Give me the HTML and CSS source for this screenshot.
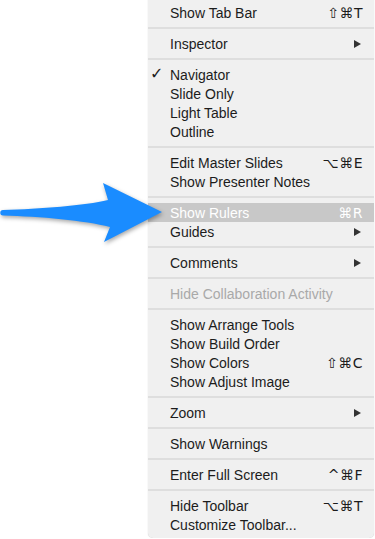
FILE: index.html
```html
<!DOCTYPE html>
<html lang="en">
<head>
  <meta charset="UTF-8">
  <meta name="viewport" content="width=device-width, initial-scale=1.0">
  <title>View menu</title>
  <link rel="stylesheet" href="styles.css">
</head>
<body>
  <div class="menu">
    <ul class="group">
      <li class="item"><span class="label">Show Tab Bar</span><span class="key">⇧⌘T</span></li>
    </ul>
    <div class="sep"></div>
    <ul class="group">
      <li class="item"><span class="label">Inspector</span><span class="sub"></span></li>
    </ul>
    <div class="sep"></div>
    <ul class="group">
      <li class="item checked"><span class="check">✓</span><span class="label">Navigator</span></li>
      <li class="item"><span class="label">Slide Only</span></li>
      <li class="item"><span class="label">Light Table</span></li>
      <li class="item"><span class="label">Outline</span></li>
    </ul>
    <div class="sep"></div>
    <ul class="group">
      <li class="item"><span class="label">Edit Master Slides</span><span class="key">⌥⌘E</span></li>
      <li class="item"><span class="label">Show Presenter Notes</span></li>
    </ul>
    <div class="sep"></div>
    <ul class="group">
      <li class="item active"><span class="label">Show Rulers</span><span class="key">⌘R</span></li>
      <li class="item"><span class="label">Guides</span><span class="sub"></span></li>
    </ul>
    <div class="sep"></div>
    <ul class="group">
      <li class="item"><span class="label">Comments</span><span class="sub"></span></li>
    </ul>
    <div class="sep"></div>
    <ul class="group">
      <li class="item disabled"><span class="label">Hide Collaboration Activity</span></li>
    </ul>
    <div class="sep"></div>
    <ul class="group">
      <li class="item"><span class="label">Show Arrange Tools</span></li>
      <li class="item"><span class="label">Show Build Order</span></li>
      <li class="item"><span class="label">Show Colors</span><span class="key">⇧⌘C</span></li>
      <li class="item"><span class="label">Show Adjust Image</span></li>
    </ul>
    <div class="sep"></div>
    <ul class="group">
      <li class="item"><span class="label">Zoom</span><span class="sub"></span></li>
    </ul>
    <div class="sep"></div>
    <ul class="group">
      <li class="item"><span class="label">Show Warnings</span></li>
    </ul>
    <div class="sep"></div>
    <ul class="group">
      <li class="item"><span class="label">Enter Full Screen</span><span class="key">^⌘F</span></li>
    </ul>
    <div class="sep"></div>
    <ul class="group">
      <li class="item"><span class="label">Hide Toolbar</span><span class="key">⌥⌘T</span></li>
      <li class="item"><span class="label">Customize Toolbar...</span></li>
    </ul>
  </div>

  <svg class="pointer" width="170" height="80" viewBox="0 0 170 80">
    <path d="M 3 40 C 40 39, 85 35.5, 108 30 L 103 13 L 162 42 L 104 72 L 110 57 C 85 50.5, 40 46.5, 3 45.5 A 2.75 2.75 0 0 1 3 40 Z" fill="#1a8cff"/>
  </svg>
</body>
</html>
```

FILE: styles.css
```css
body {
  margin: 0;
  padding: 0;
  background: #fff;
  font-family: "Liberation Sans", Arial, sans-serif;
  font-size: 14px;
  color: #1c1c1c;
}
.menu {
  margin-left: 148px;
  width: 226px;
  padding: 3px 0 4px;
  background: #f0f0f0;
  border-radius: 0 0 5px 5px;
  box-shadow: 0 0 1px rgba(0, 0, 0, 0.25);
}
.group {
  list-style: none;
  margin: 0;
  padding: 0;
}
.item {
  position: relative;
  display: flex;
  align-items: center;
  justify-content: space-between;
  height: 19px;
  padding: 0 11px 0 22px;
}
.label {
  white-space: nowrap;
}
.key {
  font-family: "DejaVu Sans", "Liberation Sans", sans-serif;
  font-size: 14px;
  letter-spacing: 0.5px;
}
.sub {
  width: 0;
  height: 0;
  margin-right: 2px;
  border-left: 7px solid #333;
  border-top: 4.5px solid transparent;
  border-bottom: 4.5px solid transparent;
}
.check {
  position: absolute;
  left: 2px;
  top: -1px;
  font-family: "DejaVu Sans", sans-serif;
  font-size: 16px;
}
.active {
  background: #c8c8c8;
  color: #fff;
}
.disabled {
  color: #a9a9a9;
}
.sep {
  margin: 5px 0;
  height: 2px;
  background: #dedede;
}
.pointer {
  position: absolute;
  left: 0;
  top: 170px;
  filter: drop-shadow(1px 2px 2px rgba(0, 0, 0, 0.35));
}
```
